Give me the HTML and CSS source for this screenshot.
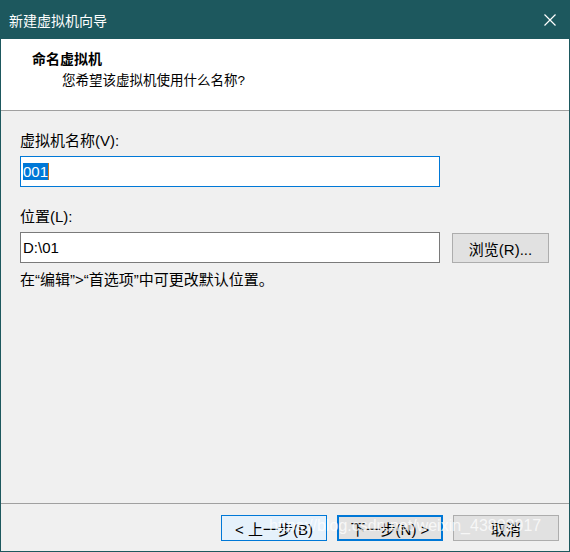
FILE: index.html
```html
<!DOCTYPE html>
<html lang="zh-CN">
<head>
<meta charset="utf-8">
<link rel="stylesheet" href="styles.css">
</head>
<body>
<div class="window">
  <div class="titlebar">
    <span class="title">新建虚拟机向导</span>
    <svg class="close" width="12" height="12" viewBox="0 0 12 12"><path d="M0.5 0.5 L11.5 11.5 M11.5 0.5 L0.5 11.5" stroke="#fff" stroke-width="1.2" fill="none"/></svg>
  </div>
  <div class="header">
    <div class="h-title">命名虚拟机</div>
    <div class="h-sub">您希望该虚拟机使用什么名称?</div>
  </div>
  <div class="content">
    <div class="label">虚拟机名称(V):</div>
    <div class="input focused"><span class="sel">001</span><span class="caret"></span></div>
    <div class="label label2">位置(L):</div>
    <div class="row">
      <div class="input">D:\01</div>
      <div class="btn browse">浏览(R)...</div>
    </div>
    <div class="note">在“编辑”&gt;“首选项”中可更改默认位置。</div>
  </div>
  <div class="footer">
    <div class="btn hover">&lt; 上一步(B)</div>
    <div class="btn default">下一步(N) &gt;</div>
    <div class="btn">取消</div>
    <div class="watermark">https://blog.csdn.net/weixin_43802917</div>
  </div>
</div>
</body>
</html>
```

FILE: styles.css
```css
* { box-sizing: border-box; }
html, body { margin: 0; padding: 0; background: #f0f0f0; }
body {
  font-family: "Liberation Sans", "Noto Sans CJK SC", sans-serif;
  color: #000;
}
.window {
  width: 570px;
  height: 552px;
  border: 1px solid #1d585e;
  border-top: none;
  display: flex;
  flex-direction: column;
  background: #f0f0f0;
}
.titlebar {
  height: 39px;
  flex: none;
  background: #1d585e;
  color: #fff;
  display: flex;
  align-items: center;
  justify-content: space-between;
  padding: 0 14px 0 9px;
  font-size: 14px;
  margin: 0 -1px;
}
.title { font-family: "Noto Sans CJK SC", sans-serif; }
.close { display: block; }
.header {
  height: 72px;
  flex: none;
  background: #fff;
  border-bottom: 1px solid #a0a0a0;
  padding: 9px 0 0 31px;
}
.h-title {
  font-family: "Noto Sans CJK SC", sans-serif;
  font-weight: bold;
  font-size: 14px;
  line-height: 20px;
}
.h-sub {
  font-family: "Liberation Sans", "Noto Sans CJK SC", sans-serif;
  font-size: 13.5px;
  line-height: 20px;
  margin: 3px 0 0 30px;
}
.content {
  flex: 1;
  padding: 20px 0 0 19px;
  font-size: 15px;
}
.label { line-height: 20px; height: 20px; }
.label2 { margin-top: 20px; }
.input {
  width: 420px;
  height: 31px;
  margin-top: 5px;
  background: #fff;
  border: 1px solid #7a7a7a;
  font-size: 15px;
  padding: 5px 0 0 2px;
  line-height: 19px;
}
.input.focused { border-color: #0078d7; }
.sel { background: #0078d7; color: #fff; }
.caret { display: inline-block; width: 1px; height: 17px; background: #c8751a; vertical-align: -3px; }
.row { display: flex; align-items: flex-start; gap: 12px; }
.btn {
  height: 26px;
  width: 106px;
  background: #e1e1e1;
  border: 1px solid #adadad;
  font-size: 15px;
  display: flex;
  align-items: center;
  justify-content: center;
}
.browse { width: 97px; height: 30px; margin-top: 6px; }
.note { margin-top: 7px; line-height: 20px; }
.footer {
  height: 48px;
  flex: none;
  border-top: 1px solid #a0a0a0;
  display: flex;
  justify-content: flex-end;
  align-items: flex-start;
  gap: 10px;
  padding: 11px 10px 0 0;
  position: relative;
}
.btn.hover { background: #e5f1fb; border-color: #0078d7; }
.btn.default { border: 2px solid #0078d7; }
.watermark {
  position: absolute;
  left: 268px;
  top: 13px;
  font-size: 16px;
  color: rgba(255, 255, 255, 0.75);
  pointer-events: none;
  white-space: nowrap;
}
```
